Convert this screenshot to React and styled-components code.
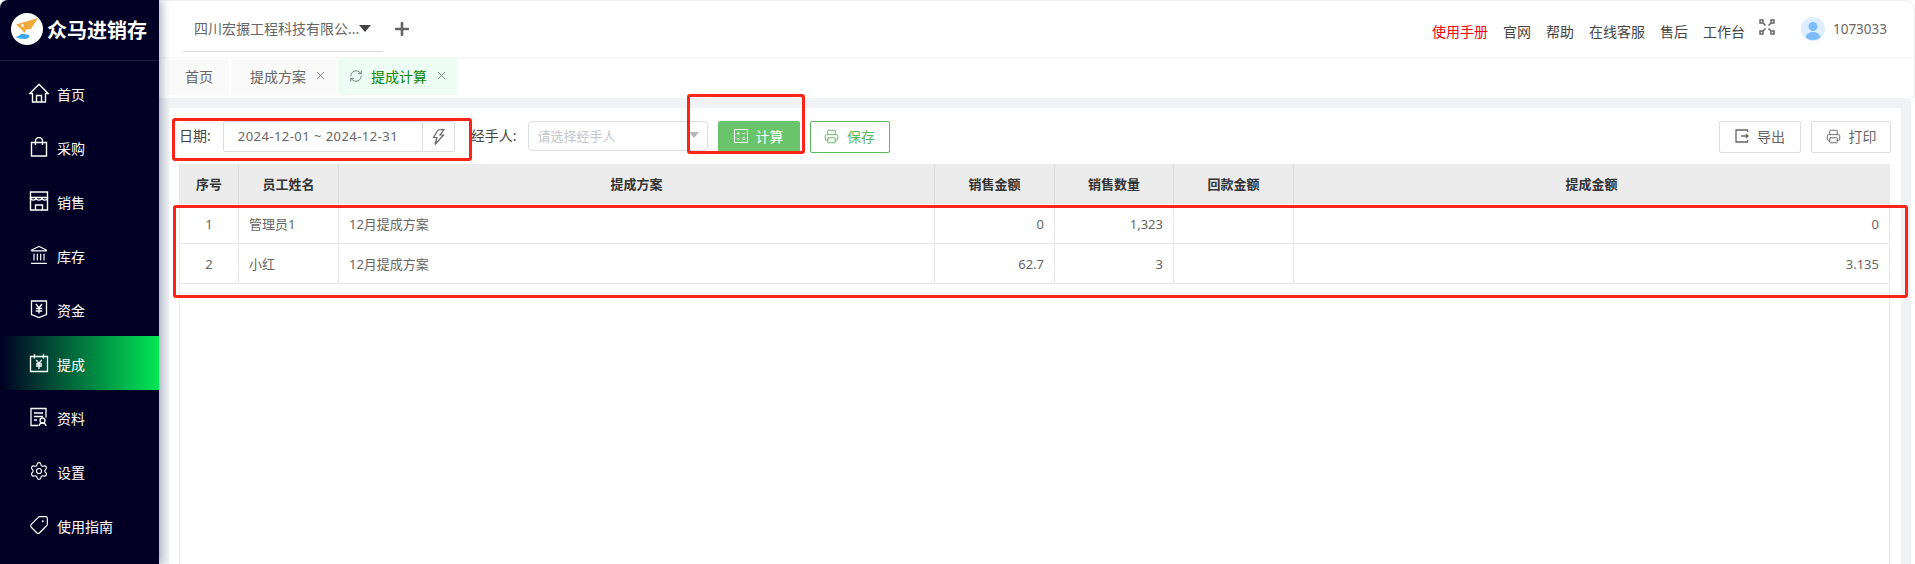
import React from 'react';
import styled, { createGlobalStyle } from 'styled-components';
import { Landmark, Settings, Tag, Printer, RefreshCw, X, Plus } from 'lucide-react';

const GlobalStyle = createGlobalStyle`
  html, body {
    margin: 0;
    padding: 0;
    background: #fff;
  }
  body {
    font-family: "Noto Sans", "Noto Sans CJK SC", sans-serif;
    overflow: hidden;
  }
  * { box-sizing: border-box; }
`;

const Page = styled.div`
  position: relative;
  display: flex;
  width: 1915px;
  height: 564px;
  overflow: hidden;
  background: #fff;
`;

const Sidebar = styled.aside`
  flex: 0 0 159px;
  height: 564px;
  background: #010024;
  border-top-left-radius: 8px;
  box-shadow: 3px 0 8px rgba(60, 70, 110, 0.4);
  z-index: 2;
`;

const Brand = styled.div`
  display: flex;
  align-items: center;
  gap: 4px;
  height: 61px;
  padding: 0 0 2px 11px;
  border-bottom: 1px solid #1d1c3c;
`;

const BrandName = styled.span`
  color: #fff;
  font-size: 20px;
  font-weight: 700;
  white-space: nowrap;
`;

const Menu = styled.nav`
  padding-top: 5px;
`;

const MenuItem = styled.div`
  display: flex;
  align-items: center;
  gap: 8px;
  height: 54px;
  padding-left: 29px;
  color: #fff;
  font-size: 14px;
  background: ${(props) =>
    props.$active ? 'linear-gradient(90deg, #010024 0%, #00e756 100%)' : 'transparent'};
  svg {
    flex: 0 0 20px;
  }
`;

const MenuLabel = styled.span`
  position: relative;
  top: 1px;
`;

const Main = styled.main`
  flex: 0 0 1756px;
  display: flex;
  flex-direction: column;
  height: 564px;
`;

const Header = styled.header`
  display: flex;
  align-items: center;
  height: 57px;
  padding-left: 24px;
  padding-right: 27px;
  border-top: 1px solid #eee;
  border-right: 1px solid #eee;
  border-top-right-radius: 10px;
  box-shadow: 0 1px 3px rgba(0, 0, 0, 0.05);
`;

const Company = styled.div`
  display: flex;
  align-items: center;
  width: 200px;
  height: 44px;
  margin-top: 1px;
  padding-left: 11px;
  padding-bottom: 2px;
  color: #666;
  font-size: 14px;
  border-bottom: 1px solid #d9d9d9;
  white-space: nowrap;
`;

const Caret = styled.i`
  width: 0;
  height: 0;
  border-left: 6px solid transparent;
  border-right: 6px solid transparent;
  border-top: 7px solid #444;
`;

const AddButton = styled.div`
  display: flex;
  margin-left: 9px;
  color: #666;
`;

const HeaderLinks = styled.div`
  display: flex;
  align-items: center;
  gap: 15px;
  margin-left: auto;
  padding-top: 3px;
  color: #444;
  font-size: 14px;
`;

const HeaderLink = styled.span`
  color: ${(props) => (props.$red ? '#f5000c' : '#444')};
  white-space: nowrap;
`;

const FullIcon = styled.svg`
  width: 18px;
  height: 18px;
  margin-left: 13px;
  margin-bottom: 4px;
`;

const Avatar = styled.svg`
  width: 24px;
  height: 24px;
  margin-left: 25px;
`;

const UserId = styled.span`
  margin-left: 8px;
  color: #666;
  font-size: 13.5px;
`;

const TabBar = styled.div`
  display: flex;
  gap: 2px;
  height: 41px;
  padding: 1px 0 3px 8px;
  border-right: 1px solid #eee;
`;

const TabItem = styled.div`
  display: flex;
  align-items: center;
  gap: 8px;
  padding: 0 ${(props) => props.$right}px 2px ${(props) => props.$left}px;
  color: ${(props) => (props.$active ? '#078407' : '#666')};
  font-size: 14px;
  background: ${(props) => (props.$active ? '#edfdf3' : '#fafafa')};
`;

const Workspace = styled.div`
  flex: 1;
  padding: 10px 10px 0;
  margin-right: 4px;
  background: #f0f2f5;
  min-height: 0;
`;

const Panel = styled.section`
  height: 100%;
  padding: 13px 10px 0 10px;
  background: #fff;
`;

const Toolbar = styled.div`
  display: flex;
  align-items: flex-start;
  height: 43px;
`;

const FieldLabel = styled.label`
  margin-left: ${(props) => props.$left || 0}px;
  height: 31px;
  line-height: 29px;
  color: #444;
  font-size: 14px;
  white-space: nowrap;
`;

const DateInput = styled.div`
  width: 200px;
  height: 31px;
  margin-left: 12px;
  padding-left: 14px;
  line-height: 28px;
  color: #666;
  font-size: 13px;
  letter-spacing: 0.45px;
  border: 1px solid #ddd;
  border-radius: 2px 0 0 2px;
`;

const BoltButton = styled.div`
  display: flex;
  align-items: center;
  justify-content: center;
  width: 32px;
  height: 31px;
  border: 1px solid #ddd;
  border-left: 0;
  border-radius: 0 2px 2px 0;
`;

const SelectBox = styled.div`
  display: flex;
  align-items: center;
  justify-content: space-between;
  width: 180px;
  height: 30px;
  margin-left: 11px;
  padding: 0 8px 2px 9px;
  color: #c4c6cc;
  font-size: 13px;
  border: 1px solid #dcdee6;
  border-radius: 4px;
`;

const SelectCaret = styled.i`
  border-left: 5px solid transparent;
  border-right: 5px solid transparent;
  border-top: 6px solid #b6b8c0;
`;

const ActionButton = styled.div`
  display: flex;
  align-items: center;
  justify-content: center;
  gap: 8px;
  width: ${(props) => props.$width}px;
  height: 32px;
  margin-left: ${(props) => props.$left || 0}px;
  padding-bottom: 2px;
  font-size: 14px;
  color: ${(props) =>
    props.$tone === 'solid' ? '#fff' : props.$tone === 'outline' ? '#5cb85c' : '#666'};
  background: ${(props) => (props.$tone === 'solid' ? '#6ac46b' : '#fff')};
  border: 1px solid
    ${(props) =>
      props.$tone === 'solid' ? '#6ac46b' : props.$tone === 'outline' ? '#5cb85c' : '#ddd'};
  border-radius: 2px;
`;

const ToolbarSpacer = styled.div`
  flex: 1;
`;

const TableWrap = styled.div`
  width: 1711px;
  height: 400px;
  border-left: 1px solid #e8e8e8;
  border-right: 1px solid #e8e8e8;
`;

const Row = styled.div`
  display: grid;
  grid-template-columns: 59px 100px 596px 120px 119px 120px 1fr;
  height: 40px;
  background: ${(props) => (props.$head ? '#ececec' : '#fff')};
  border-bottom: 1px solid #e8e8e8;
`;

const Cell = styled.div`
  padding: 0 10px;
  line-height: 40px;
  font-size: 13px;
  color: ${(props) => (props.$head ? '#333' : '#666')};
  font-weight: ${(props) => (props.$head ? 700 : 400)};
  text-align: ${(props) => props.$align || 'left'};
  border-right: 1px solid ${(props) => (props.$head ? '#dcdcdc' : '#e8e8e8')};
  white-space: nowrap;
  &:last-child {
    border-right: 0;
  }
`;

// 图片上的红色标注框
const RedBox = styled.div`
  position: absolute;
  left: ${(props) => props.$x}px;
  top: ${(props) => props.$y}px;
  width: ${(props) => props.$w}px;
  height: ${(props) => props.$h}px;
  border: 3px solid #fb2418;
  border-radius: 3px;
  z-index: 5;
  pointer-events: none;
`;

const icon = { size: 20, strokeWidth: 1.4 };

const HomeIcon = () => (
  <svg width="20" height="20" viewBox="0 0 20 20" fill="none" stroke="#fff" strokeWidth="1.4">
    <path d="M.8 10.500L10 1.200l9.200 9.300h-2.700v8.500h-13v-8.500z" />
    <path d="M7.500 19v-6.500h5V19" />
  </svg>
);

const BagIcon = () => (
  <svg width="20" height="20" viewBox="0 0 20 20" fill="none" stroke="#fff" strokeWidth="1.4">
    <path d="M2.500 5.500h15v13.500h-15z" />
    <path d="M6.500 8V4a3.500 3.500 0 0 1 7 0v4" />
  </svg>
);

const StoreIcon = () => (
  <svg width="20" height="20" viewBox="0 0 20 20" fill="none" stroke="#fff" strokeWidth="1.4">
    <path d="M1.500 1h17v5.500h-17z" />
    <path d="M1.500 6.500V19h17V6.500" />
    <path d="M1.500 6.500c0 3.500 5.500 3.500 5.500 0 0 3.500 6 3.500 6 0 0 3.500 5.500 3.500 5.500 0" />
    <path d="M6.500 19v-5h7v5" />
  </svg>
);

// 资金：盾牌 + ¥
const MoneyIcon = () => (
  <svg width="20" height="20" viewBox="0 0 20 20" fill="none" stroke="#fff" strokeWidth="1.3">
    <path d="M2.500 2h15v13.500L10 18.500 2.500 15.500z" />
    <path d="M7 5l3 4 3-4M6.800 9.500h6.400M6.800 12h6.400M10 9v5.500" />
  </svg>
);

// 提成：日历 + ¥
const CommissionIcon = () => (
  <svg width="20" height="20" viewBox="0 0 20 20" fill="none" stroke="#fff" strokeWidth="1.3">
    <path d="M1.500 3.500h17v15h-17z" />
    <path d="M5.500 1v4.500M14.500 1v4.500" />
    <path d="M7.200 7l2.800 3.500L12.800 7M7 11h6M7 13h6M10 10.500V16" />
  </svg>
);

// 资料：文档 + 人像
const ProfileIcon = () => (
  <svg width="20" height="20" viewBox="0 0 20 20" fill="none" stroke="#fff" strokeWidth="1.3">
    <path d="M9 18.500H2V1.500h15v9" />
    <path d="M5 6h9M5 9.500h9M5 13h3" />
    <circle cx="13.500" cy="13.500" r="2.500" />
    <path d="M10 19c.3-2.300 1.700-3 3.500-3s3.200.7 3.500 3" />
  </svg>
);

const BoltIcon = () => (
  <svg width="14" height="16" viewBox="0 0 14 16" fill="none" stroke="#666" strokeWidth="1.2">
    <path d="M7 1l6-.5-4 5.500h3.500L4 15.500 6 8.500H2.500z" />
  </svg>
);

const CalcIcon = () => (
  <svg width="14" height="14" viewBox="0 0 14 14" fill="none" stroke="#fff" strokeWidth="1">
    <path d="M.5.500h13v13H.5z" />
    <path d="M3 4.500h2.500M4.250 3.200v2.600M8.500 4.500H11M3.200 8.700l2 2M5.200 8.700l-2 2M8.500 8.800H11M8.500 10.600H11" />
  </svg>
);

const ExportIcon = () => (
  <svg width="14" height="14" viewBox="0 0 14 14" fill="none" stroke="#666" strokeWidth="1.3">
    <path d="M12.500 3V1H1v12h11.500v-2" />
    <path d="M6 7h7.500M11 5l2 2-2 2" />
  </svg>
);

const menus = [
  { name: '首页', icon: <HomeIcon /> },
  { name: '采购', icon: <BagIcon /> },
  { name: '销售', icon: <StoreIcon /> },
  { name: '库存', icon: <Landmark {...icon} /> },
  { name: '资金', icon: <MoneyIcon /> },
  { name: '提成', icon: <CommissionIcon />, active: true },
  { name: '资料', icon: <ProfileIcon /> },
  { name: '设置', icon: <Settings {...icon} /> },
  { name: '使用指南', icon: <Tag {...icon} style={{ transform: 'scaleX(-1)' }} /> },
];

const links = ['官网', '帮助', '在线客服', '售后', '工作台'];

const columns = ['序号', '员工姓名', '提成方案', '销售金额', '销售数量', '回款金额', '提成金额'];

const rows = [
  ['1', '管理员1', '12月提成方案', '0', '1,323', '', '0'],
  ['2', '小红', '12月提成方案', '62.7', '3', '', '3.135'],
];

const aligns = ['center', 'left', 'left', 'right', 'right', 'right', 'right'];

export default function App() {
  return (
    <Page>
      <GlobalStyle />
      <Sidebar>
        <Brand>
          <svg width="32" height="32" viewBox="0 0 32 32">
            <circle cx="16" cy="16" r="16" fill="#fff" />
            <path d="M5 11.500L27 5l-7 11-5 .5-1.500 3.500L10 16z" fill="#f2a93b" />
            <circle cx="11.500" cy="12.500" r="1.500" fill="#fff" />
            <path d="M4 24c2 0 4-1 6-3 3 0 6 0 8 1 1 2-1 4-4 4-4 0-7-1-10-2z" fill="#3ea7ee" />
          </svg>
          <BrandName>众马进销存</BrandName>
        </Brand>
        <Menu>
          {menus.map((m) => (
            <MenuItem key={m.name} $active={m.active}>
              {m.icon}
              <MenuLabel>{m.name}</MenuLabel>
            </MenuItem>
          ))}
        </Menu>
      </Sidebar>

      <Main>
        <Header>
          <Company>
            四川宏搌工程科技有限公...
            <Caret />
          </Company>
          <AddButton>
            <Plus size={20} strokeWidth={3.2} />
          </AddButton>
          <HeaderLinks>
            <HeaderLink $red>使用手册</HeaderLink>
            {links.map((l) => (
              <HeaderLink key={l}>{l}</HeaderLink>
            ))}
          </HeaderLinks>
          <FullIcon viewBox="0 0 18 18" fill="none" stroke="#666" strokeWidth="1.500">
            <path d="M2 2h3v3H2zM5 5l2.500 2.500M16 2h-3v3h3zM13 5l-2.500 2.500M2 16h3v-3H2zM5 13l2.500-2.500M16 16h-3v-3h3zM13 13l-2.500-2.500" />
          </FullIcon>
          <Avatar viewBox="0 0 24 24">
            <circle cx="12" cy="12" r="12" fill="#deeefe" />
            <circle cx="12" cy="9.500" r="4.500" fill="#7dbdfc" />
            <path d="M4.500 20.500c1-4 4-5.500 7.500-5.500s6.500 1.500 7.500 5.500a12 12 0 0 1-15 0z" fill="#7dbdfc" />
          </Avatar>
          <UserId>1073033</UserId>
        </Header>

        <TabBar>
          <TabItem $left={18} $right={16}>首页</TabItem>
          <TabItem $left={19} $right={9}>
            提成方案
            <X size={13} strokeWidth={1.4} />
          </TabItem>
          <TabItem $active $left={11} $right={9}>
            <RefreshCw size={14} strokeWidth={1.4} color="#666" />
            提成计算
            <X size={13} strokeWidth={1.4} color="#666" />
          </TabItem>
        </TabBar>

        <Workspace>
          <Panel>
            <Toolbar>
              <FieldLabel>日期:</FieldLabel>
              <DateInput>2024-12-01 ~ 2024-12-31</DateInput>
              <BoltButton>
                <BoltIcon />
              </BoltButton>
              <FieldLabel $left={16}>经手人:</FieldLabel>
              <SelectBox>
                请选择经手人
                <SelectCaret />
              </SelectBox>
              <ActionButton $tone="solid" $width={82} $left={10}>
                <CalcIcon />
                计算
              </ActionButton>
              <ActionButton $tone="outline" $width={80} $left={10}>
                <Printer size={15} strokeWidth={1.5} />
                保存
              </ActionButton>
              <ToolbarSpacer />
              <ActionButton $width={82}>
                <ExportIcon />
                导出
              </ActionButton>
              <ActionButton $width={80} $left={10}>
                <Printer size={15} strokeWidth={1.5} />
                打印
              </ActionButton>
            </Toolbar>
            <TableWrap>
              <Row $head>
                {columns.map((c) => (
                  <Cell key={c} $head $align="center">
                    {c}
                  </Cell>
                ))}
              </Row>
              {rows.map((r) => (
                <Row key={r[0]}>
                  {r.map((v, i) => (
                    <Cell key={i} $align={aligns[i]}>
                      {v}
                    </Cell>
                  ))}
                </Row>
              ))}
            </TableWrap>
          </Panel>
        </Workspace>
      </Main>

      <RedBox $x={172} $y={118} $w={300} $h={43} />
      <RedBox $x={687} $y={94} $w={118} $h={60} />
      <RedBox $x={173} $y={205} $w={1735} $h={93} />
    </Page>
  );
}
